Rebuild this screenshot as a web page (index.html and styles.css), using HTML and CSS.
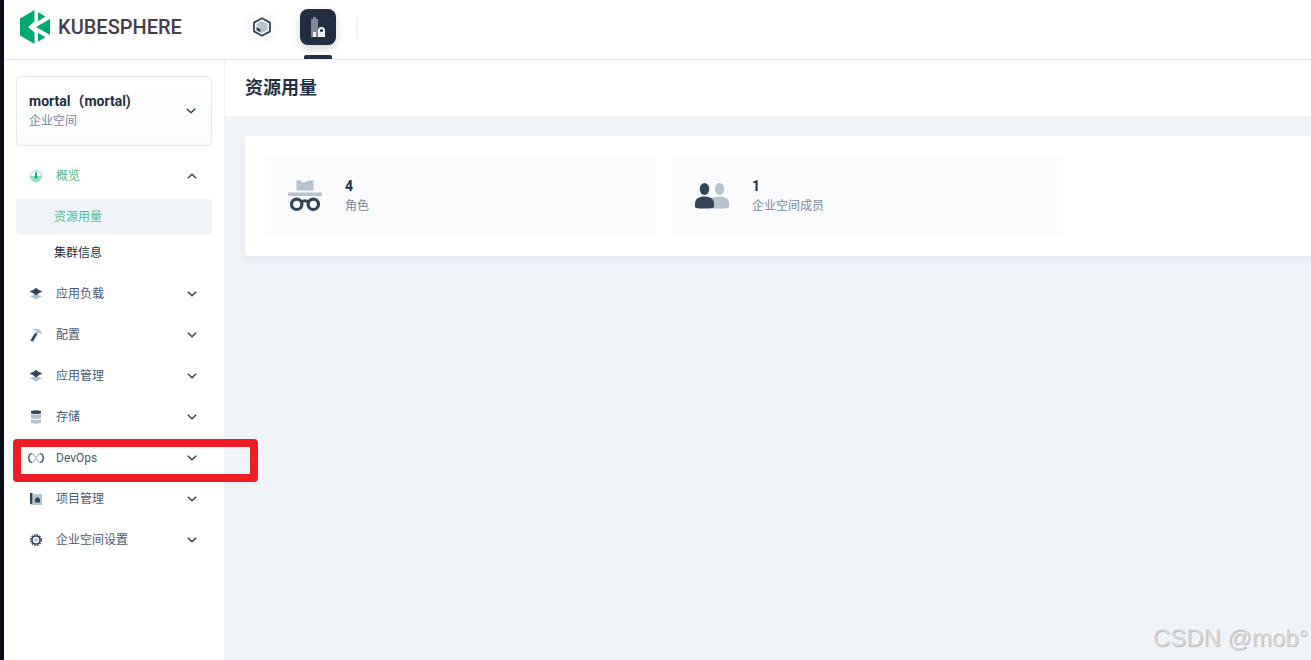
FILE: index.html
```html
<!DOCTYPE html>
<html lang="zh-CN">
<head>
    <meta charset="UTF-8">
    <title>资源用量 - KubeSphere</title>
    <link rel="stylesheet" href="styles.css">
</head>
<body>
<svg class="defs" aria-hidden="true">
    <symbol id="chevron" viewBox="0 0 16 16">
        <path d="M3.800 5.800 8 9.800l4.200-4" fill="none" stroke="#324558" stroke-width="1.500"/>
    </symbol>
    <symbol id="layers" viewBox="0 0 16 16">
        <path d="M2 10.500 8 7.500l6 3-4 1.700L8 14l-2-1.800z" fill="#b6c2cd"/>
        <path d="M2 5.500 5.500 4 8 2l2.500 2L14 5.500 10.500 7.200 8 9.200 5.500 7.200z" fill="#324558" stroke="#324558" stroke-width=".5"/>
    </symbol>
</svg>

<header class="header">
    <a class="logo" href="#">
        <svg width="30" height="34" viewBox="0 0 30 34">
            <path d="M0 8.500 14.500 0v11.500L8 17l6.500 5.500V34L0 25.500z" fill="#00a971"/>
            <path d="M18 2.200 25.500 6.500 18 11.300zM30 9v16l-14-8zM18 22.700l7.500 4.600L18 31.600z" fill="#00a971"/>
        </svg>
        <span class="logo-text">KUBESPHERE</span>
    </a>
    <nav class="switcher">
        <button class="switch" aria-label="平台">
            <svg width="20" height="20" viewBox="0 0 20 20">
                <path d="M10 1.200 18 5.600v8.800l-8 4.400-8-4.400V5.600z" fill="#fff" stroke="#324558" stroke-width="1.800"/>
                <path d="M10 4 15.500 7v6L10 16l-1-.5v-4L4.500 8.500V7z" fill="#b6c2cd"/>
                <path d="M4.500 9.800 8.500 12v3.500L4.500 13.300z" fill="#324558"/>
            </svg>
        </button>
        <div class="switch-current">
            <button class="switch active" aria-label="企业空间">
                <svg width="20" height="20" viewBox="0 0 20 20">
                    <path d="M3 2h2V0h3v2h2v18H3z" fill="#828997"/>
                    <path d="M5 15h3v5H5zM10 20v-6.500a3.500 3.500 0 0 1 7 0V20z" fill="#f2f4f5"/>
                    <circle cx="13.500" cy="13.500" r="1.500" fill="#242e42"/>
                </svg>
            </button>
        </div>
        <span class="divider"></span>
    </nav>
</header>

<div class="layout">
    <aside class="sidebar">
        <button class="workspace">
            <span class="workspace-info">
                <strong>mortal（mortal)</strong>
                <span class="muted">企业空间</span>
            </span>
            <svg class="icon"><use href="#chevron"/></svg>
        </button>

        <nav class="menu">
            <button class="menu-item open">
                <svg class="icon" viewBox="0 0 16 16">
                    <circle cx="8" cy="8" r="5.500" fill="#fff" stroke="#94dfc3"/>
                    <path d="M2 8h12A6 6 0 0 1 2 8z" fill="#94dfc3"/>
                    <path d="M7.400 4h1.200l.7 5.200a1.300 1.300 0 0 1-2.600 0z" fill="#00a971"/>
                </svg>
                <span>概览</span>
                <svg class="icon arrow"><use href="#chevron"/></svg>
            </button>
            <div class="submenu">
                <a class="selected" href="#">资源用量</a>
                <a href="#">集群信息</a>
            </div>
            <button class="menu-item">
                <svg class="icon"><use href="#layers"/></svg>
                <span>应用负载</span>
                <svg class="icon arrow"><use href="#chevron"/></svg>
            </button>
            <button class="menu-item">
                <svg class="icon" viewBox="0 0 16 16">
                    <path d="M7.200 5.800 9.400 7 5 14.500 2.300 13.500z" fill="#324558"/>
                    <path d="M4 2.500C7 1.200 10 1.500 12 3l2 3-1 1-2.200-1.200L9.500 7 7.200 5.800l1-1.700C7 3.500 5.500 3 4 2.500z" fill="#b6c2cd"/>
                </svg>
                <span>配置</span>
                <svg class="icon arrow"><use href="#chevron"/></svg>
            </button>
            <button class="menu-item">
                <svg class="icon"><use href="#layers"/></svg>
                <span>应用管理</span>
                <svg class="icon arrow"><use href="#chevron"/></svg>
            </button>
            <button class="menu-item">
                <svg class="icon" viewBox="0 0 16 16">
                    <path d="M3 4.500q5 2.500 10 0V9Q8 11.500 3 9zM3 10q5 2.500 10 0v3.500Q8 16 3 13.500z" fill="#b6c2cd"/>
                    <path d="M3 2q5-1.500 10 0v2.200q-5 1.800-10 0z" fill="#324558"/>
                </svg>
                <span>存储</span>
                <svg class="icon arrow"><use href="#chevron"/></svg>
            </button>
            <button class="menu-item">
                <svg class="icon" viewBox="0 0 16 16">
                    <g fill="none" stroke-width="1.500">
                        <path d="M3.500 3.700C8 3.200 8 12.800 12.500 12.300" stroke="#b6c2cd"/>
                        <path d="M3.500 12.300C8 12.800 8 3.200 12.500 3.700" stroke="#b6c2cd"/>
                        <path d="M3.700 3.700C-.2 4.200-.2 11.800 3.700 12.300M12.300 3.700c3.900.5 3.900 8.100 0 8.600" stroke="#324558" stroke-width="1.300"/>
                    </g>
                </svg>
                <span>DevOps</span>
                <svg class="icon arrow"><use href="#chevron"/></svg>
                <span class="highlight"></span>
            </button>
            <button class="menu-item">
                <svg class="icon" viewBox="0 0 16 16">
                    <path d="M5 3h9v11H3v-2h2z" fill="#b6c2cd"/>
                    <path d="M2 2h2.500v10L3 13H2zM7 11.500V8l2.500-2L12 8v3.500z" fill="#324558"/>
                </svg>
                <span>项目管理</span>
                <svg class="icon arrow"><use href="#chevron"/></svg>
            </button>
            <button class="menu-item">
                <svg class="icon" viewBox="0 0 16 16">
                    <circle cx="8" cy="8" r="5.300" fill="none" stroke="#324558" stroke-width="1.600" stroke-dasharray="1.600 1.175"/>
                    <circle cx="8" cy="8" r="4" fill="#fff" stroke="#324558" stroke-width="1.600"/>
                    <circle cx="8" cy="8" r="2" fill="#b6c2cd"/>
                </svg>
                <span>企业空间设置</span>
                <svg class="icon arrow"><use href="#chevron"/></svg>
            </button>
        </nav>
    </aside>

    <main class="main">
        <div class="title-bar">
            <h1>资源用量</h1>
        </div>
        <section class="card">
            <div class="stat">
                <svg width="40" height="40" viewBox="0 0 40 40">
                    <path d="M11.500 4.500 14.500 4l3.500 2.500q2.500-.3 4-1.500L28.500 4v10.500h-17zM3 16.500h34v3.500H3z" fill="#b6c2cd"/>
                    <g fill="none" stroke="#324558" stroke-width="3.200">
                        <circle cx="11.700" cy="28.300" r="5.200"/>
                        <circle cx="28.300" cy="28.300" r="5.200"/>
                        <path d="M16 26q4-2.500 8 0"/>
                    </g>
                </svg>
                <div class="stat-text">
                    <strong>4</strong>
                    <span class="muted">角色</span>
                </div>
            </div>
            <div class="stat">
                <svg width="40" height="40" viewBox="0 0 40 40">
                    <ellipse cx="27.500" cy="13" rx="4.700" ry="6" fill="#b6c2cd"/>
                    <path d="M19 22q4-1.500 8-1.500c6 0 10 2.500 10 7V31q0 1.500-9 1.500H20z" fill="#b6c2cd"/>
                    <ellipse cx="12.500" cy="13" rx="4.800" ry="6" fill="#324558"/>
                    <path d="M3 31v-3.500c0-4.500 4-7 9.500-7s9.500 2.500 9.500 7V31q0 1.500-9.500 1.500T3 31z" fill="#324558"/>
                </svg>
                <div class="stat-text">
                    <strong>1</strong>
                    <span class="muted">企业空间成员</span>
                </div>
            </div>
        </section>
    </main>
</div>

<div class="watermark">CSDN @mob°</div>
</body>
</html>
```
FILE: styles.css
```css
* {
    box-sizing: border-box;
}

body {
    margin: 0;
    min-height: 100vh;
    display: flex;
    flex-direction: column;
    border-left: 4px solid #090d18;
    font-family: Roboto, "Noto Sans CJK SC", sans-serif;
    font-size: 12px;
    line-height: 20px;
    color: #242e42;
    background-color: #fff;
}

button {
    border: none;
    background: none;
    padding: 0;
    font: inherit;
    color: inherit;
    text-align: left;
    cursor: pointer;
}

a {
    color: inherit;
    text-decoration: none;
}

.defs {
    position: absolute;
    width: 0;
    height: 0;
}

.icon {
    width: 16px;
    height: 16px;
    flex: none;
}

.muted {
    color: #79879c;
}

/* header */
.header {
    display: flex;
    height: 60px;
    padding-left: 16px;
    border-bottom: 1px solid #e3e9ef;
}

.logo {
    display: flex;
    align-items: center;
    gap: 8px;
    width: 224px;
    padding-bottom: 5px;
}

.logo-text {
    font-size: 20px;
    font-weight: 500;
    color: #453d4e;
}

.switcher {
    display: flex;
    align-items: flex-start;
    gap: 20px;
    padding-top: 9px;
}

.switch {
    display: flex;
    align-items: center;
    justify-content: center;
    width: 36px;
    height: 36px;
    border-radius: 50%;
    background-color: #f9fbfd;
}

.switch.active {
    border-radius: 8px;
    background-color: #242e42;
    box-shadow: 0 4px 8px rgba(36, 46, 66, 0.2);
}

.switch-current {
    display: flex;
    flex-direction: column;
    align-items: center;
    gap: 10px;
}

.switch-current::after {
    content: "";
    width: 28px;
    height: 4px;
    border-radius: 2px 2px 0 0;
    background-color: #242e42;
}

.divider {
    width: 2px;
    height: 20px;
    margin-top: 10px;
    background-color: #eff4f9;
}

.layout {
    display: flex;
    flex: 1;
}

/* sidebar */
.sidebar {
    width: 220px;
    flex: none;
    padding: 16px 12px;
}

.workspace {
    display: flex;
    align-items: center;
    justify-content: space-between;
    width: 100%;
    padding: 14px 12px;
    border: 1px solid #e3e9ef;
    border-radius: 4px;
    background: linear-gradient(#fff, #f9fbfd);
}

.workspace-info {
    display: flex;
    flex-direction: column;
}

.workspace strong {
    font-size: 14px;
}

.menu {
    display: flex;
    flex-direction: column;
    gap: 5px;
    margin-top: 12px;
}

.menu-item {
    position: relative;
    display: flex;
    align-items: center;
    gap: 12px;
    height: 36px;
    padding: 0 12px;
    color: #4a5974;
}

.menu-item.open {
    color: #55bc8a;
}

.arrow {
    margin-left: auto;
}

.open .arrow {
    transform: rotate(180deg);
}

.submenu a {
    display: block;
    padding: 8px 38px;
    border-radius: 4px;
}

.submenu .selected {
    color: #55bc8a;
    background-color: #eff4f9;
}

.highlight {
    position: absolute;
    z-index: 1;
    top: -1px;
    left: -3px;
    width: 245px;
    height: 43px;
    border: 8px solid #ee1c25;
    border-radius: 4px;
}

/* content */
.main {
    flex: 1;
    min-width: 0;
    overflow: hidden;
    background-color: #eff4f9;
}

.title-bar {
    padding: 14px 20px;
    border-left: 1px solid #eff4f9;
    background-color: #fff;
}

h1 {
    margin: 0;
    font-size: 18px;
    line-height: 28px;
}

.card {
    display: grid;
    grid-template-columns: repeat(3, 1fr);
    gap: 16px;
    min-width: 1245px;
    margin: 20px 21px;
    padding: 20px;
    border-radius: 4px;
    background-color: #fff;
    box-shadow: 0 4px 8px rgba(36, 46, 66, 0.06);
}

.stat {
    display: flex;
    align-items: center;
    gap: 20px;
    padding: 20px;
    border-radius: 4px;
    background-color: #f9fbfd;
}

.stat-text {
    display: flex;
    flex-direction: column;
}

.stat-text strong {
    font-size: 14px;
}

.watermark {
    position: absolute;
    right: 3px;
    bottom: 8px;
    font-family: "Liberation Sans", sans-serif;
    font-size: 24px;
    line-height: 28px;
    color: #d6d9dc;
    text-shadow: 1px 1px 1px #b4b7ba, -1px -1px 1px #fff;
}
```
